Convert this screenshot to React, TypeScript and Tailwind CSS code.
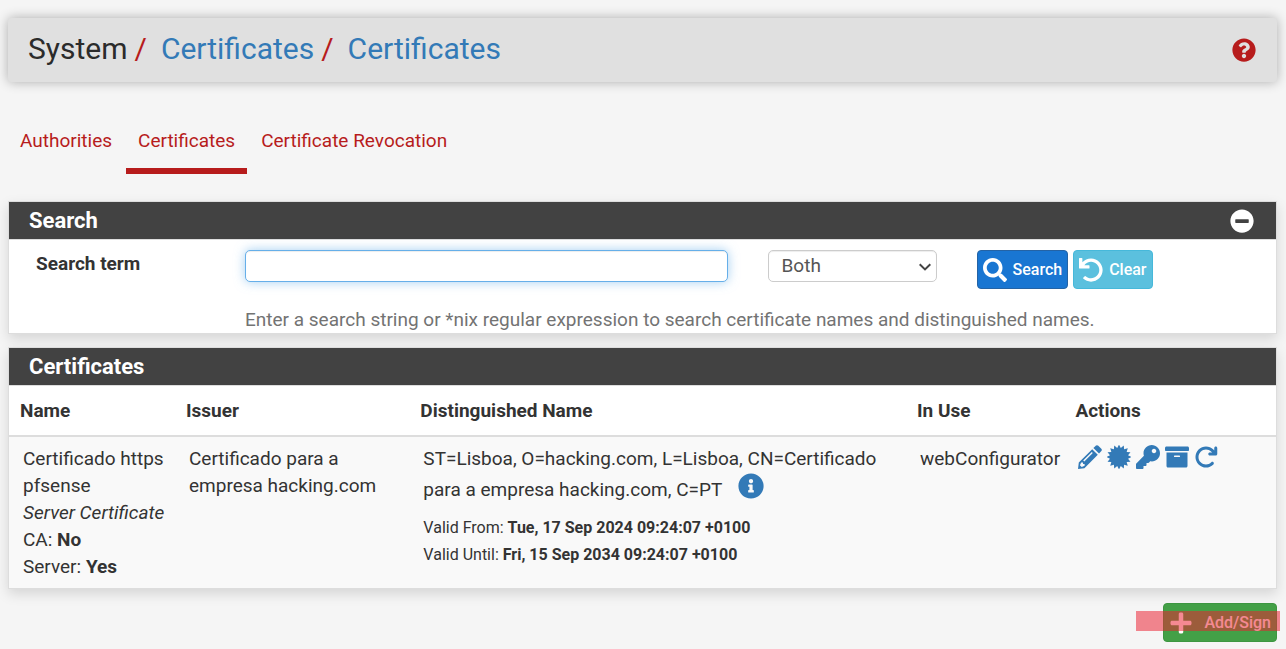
import React from "react";
import {
  FaArchive,
  FaInfoCircle,
  FaKey,
  FaMinusCircle,
  FaPlus,
  FaQuestionCircle,
  FaSearch,
  FaUndo,
} from "react-icons/fa";
import { FaArrowRotateRight } from "react-icons/fa6";

const tabs = [
  { label: "Authorities", active: false },
  { label: "Certificates", active: true },
  { label: "Certificate Revocation", active: false },
];

function PencilIcon() {
  return (
    <svg viewBox="0 0 24 24" className="size-6" fill="currentColor" aria-hidden="true">
      <path
        fillRule="evenodd"
        d="M14.2 4.2 19.8 9.8 6.4 23.2 0 24 .8 17.6ZM3.2 17.4 1.9 20.3 3.7 22.1 6.6 20.8 6.6 19 5 19 5 17.4ZM13.8 7 5.2 15.6 6.3 16.4 14.8 8Z"
      />
      <path d="M15.4 3 18 .6Q19.2-.3 20.3.7L23.3 3.7Q24.3 4.8 23.4 6L21 8.6Z" />
    </svg>
  );
}

const burst = Array.from({ length: 32 }, (_, i) => {
  const r = i % 2 === 0 ? 12.4 : 9.2;
  const a = (i * Math.PI) / 16;
  return `${(12 + r * Math.sin(a)).toFixed(2)},${(12 - r * Math.cos(a)).toFixed(2)}`;
}).join(" ");

function BurstIcon() {
  return (
    <svg viewBox="0 0 24 24" className="size-6" fill="currentColor" aria-hidden="true">
      <polygon points={burst} />
    </svg>
  );
}

const actions = [
  { label: "Edit certificate", icon: <PencilIcon /> },
  { label: "Export certificate", icon: <BurstIcon /> },
  { label: "Export key", icon: <FaKey className="size-6" /> },
  { label: "Export archive", icon: <FaArchive className="size-6" /> },
  { label: "Renew certificate", icon: <FaArrowRotateRight className="size-6" /> },
];

function Panel({
  title,
  action,
  children,
}: {
  title: string;
  action?: React.ReactNode;
  children: React.ReactNode;
}) {
  return (
    <section className="border border-[#ddd] bg-white shadow-[0_5px_12px_rgba(0,0,0,0.13)]">
      <div className="flex h-[38px] items-center justify-between border-b border-[#ddd] bg-[#424242] pr-[22px] pl-5 text-white">
        <h2 className="text-[22px] leading-6 font-bold">{title}</h2>
        {action}
      </div>
      {children}
    </section>
  );
}

export default function App() {
  return (
    <div className="min-h-screen bg-[#f5f5f5] px-2 pt-[18px] pb-2 font-['Roboto',sans-serif] text-[19px] leading-[27px] text-[#333]">
      <header className="mr-px flex h-16 items-center justify-between rounded-sm bg-[#e0e0e0] pr-[21px] pl-5 shadow-[0_0_12px_rgba(0,0,0,0.3)]">
        <nav aria-label="Breadcrumb" className="pb-0.5">
          <ol className="flex text-[30px] leading-9 text-[#2b2b2b]">
            <li>System</li>
            <li>
              <span className="pr-[14px] pl-[7px] text-[#b71c1c]">/</span>
              <a href="#certificates" className="text-[#337ab7]">Certificates</a>
            </li>
            <li>
              <span className="pr-[14px] pl-[7px] text-[#b71c1c]">/</span>
              <a href="#certificates" className="text-[#337ab7]">Certificates</a>
            </li>
          </ol>
        </nav>
        <a href="#help" aria-label="Help" className="text-[#b71c1c]">
          <FaQuestionCircle className="size-6" />
        </a>
      </header>

      <nav aria-label="Sections" className="mt-10 flex gap-[2px]">
        {tabs.map((tab) => (
          <a
            key={tab.label}
            href="#tab"
            className={
              tab.active
                ? "h-[52px] border-b-[6px] border-[#b71c1c] px-3 pt-[5px] text-[#b71c1c]"
                : "h-[52px] px-3 pt-[5px] text-[#b71c1c]"
            }
          >
            {tab.label}
          </a>
        ))}
      </nav>

      <main className="mt-[27px] mr-px">
        <Panel
          title="Search"
          action={
            <button type="button" aria-label="Collapse search" className="text-white">
              <FaMinusCircle className="size-6" />
            </button>
          }
        >
          <form className="grid grid-cols-[208px_minmax(0,1fr)] pt-2.5 pl-[27px]">
            <label htmlFor="term" className="font-bold">
              Search term
            </label>
            <div>
              <div className="flex items-start pl-px">
                <input
                  id="term"
                  type="text"
                  className="h-8 w-[46.8%] rounded-[5px] border border-[#66afe9] bg-white px-3 shadow-[inset_0_1px_1px_rgba(0,0,0,0.075),0_0_11px_rgba(102,175,233,0.6)] outline-none"
                />
                <div className="relative ml-10 w-[169px]">
                  <select
                    aria-label="Search in"
                    className="h-8 w-full appearance-none rounded-[5px] border border-[#ccc] bg-white px-[13px] pb-0.5 text-[#555] shadow-[inset_0_1px_1px_rgba(0,0,0,0.075)]"
                  >
                    <option>Both</option>
                    <option>Name</option>
                    <option>Distinguished Name</option>
                  </select>
                  <svg
                    viewBox="0 0 12 8"
                    className="pointer-events-none absolute top-[13px] right-[6px] h-2 w-3 text-[#444]"
                    fill="none"
                    stroke="currentColor"
                    strokeWidth="2"
                    aria-hidden="true"
                  >
                    <path d="M.7 1.2 6 6.4 11.3 1.2" />
                  </svg>
                </div>
                <button
                  type="button"
                  className="ml-10 flex h-[39px] items-center gap-[6px] rounded-[4px] border border-[#2463a5] bg-[#1976d2] px-[5px] text-base font-medium text-white"
                >
                  <FaSearch className="size-6" />
                  Search
                </button>
                <button
                  type="button"
                  className="ml-[5px] flex h-[39px] items-center gap-[6px] rounded-[4px] border border-[#46b8da] bg-[#5bc0de] px-[5px] text-base font-medium text-white"
                >
                  <FaUndo className="size-6" />
                  Clear
                </button>
              </div>
              <p className="mt-[17px] pl-px text-[#737373]">
                Enter a search string or *nix regular expression to search certificate names and
                distinguished names.
              </p>
            </div>
          </form>
        </Panel>

        <div className="mt-[13px]">
          <Panel title="Certificates">
            <table className="w-full table-fixed border-collapse">
              <thead>
                <tr className="border-b-2 border-[#ddd] text-left">
                  <th className="w-[13.1%] px-[11px] pt-[11px] pb-[11px]">Name</th>
                  <th className="w-[18.5%] px-[11px]">Issuer</th>
                  <th className="w-[39.2%] px-[11px]">Distinguished Name</th>
                  <th className="w-[12.5%] px-[11px]">In Use</th>
                  <th className="px-[11px]">Actions</th>
                </tr>
              </thead>
              <tbody>
                <tr className="bg-[#f9f9f9] align-top">
                  <td className="py-2 pr-2 pl-[14px]">
                    Certificado https pfsense
                    <br />
                    <i>Server Certificate</i>
                    <br />
                    CA: <b>No</b>
                    <br />
                    Server: <b>Yes</b>
                  </td>
                  <td className="py-2 pr-2 pl-[14px]">Certificado para a empresa hacking.com</td>
                  <td className="py-2 pr-2 pl-[14px]">
                    ST=Lisboa, O=hacking.com, L=Lisboa, CN=Certificado para a empresa hacking.com,
                    C=PT
                    <button
                      type="button"
                      aria-label="Details"
                      className="ml-4 inline-block pt-px align-[-3px] leading-none text-[#337ab7]"
                    >
                      <FaInfoCircle className="block size-[26px]" />
                    </button>
                    <div className="mt-[11px] text-base">
                      <div className="leading-[27px]">
                        Valid From: <b>Tue, 17 Sep 2024 09:24:07 +0100</b>
                      </div>
                      <div className="leading-[27px]">
                        Valid Until: <b>Fri, 15 Sep 2034 09:24:07 +0100</b>
                      </div>
                    </div>
                  </td>
                  <td className="py-2 pr-2 pl-[14px]">webConfigurator</td>
                  <td className="py-2 pr-2 pl-[14px]">
                    <div className="flex gap-[5px] text-[#337ab7]">
                      {actions.map((a) => (
                        <a key={a.label} href="#action" aria-label={a.label}>
                          {a.icon}
                        </a>
                      ))}
                    </div>
                  </td>
                </tr>
              </tbody>
            </table>
          </Panel>
        </div>

        <div className="mt-[14px] flex justify-end">
          <div className="relative">
            <button
              type="button"
              className="flex h-[39px] items-center gap-[11px] rounded-[4px] border border-[#3d9641] bg-[#43a047] px-[5px] text-base font-medium text-white"
            >
              <FaPlus className="size-6" />
              Add/Sign
            </button>
            <div className="pointer-events-none absolute top-2 -right-[3px] -left-[27px] h-5 bg-[rgba(237,32,50,0.53)]" />
          </div>
        </div>
      </main>
    </div>
  );
}
